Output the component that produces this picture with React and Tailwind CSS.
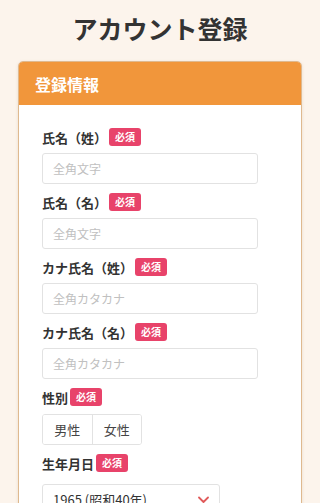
import React from 'react';

const Badge = () => (
  <span className="ml-[2px] inline-flex h-[18px] items-center rounded-[3px] bg-[#e8436a] px-[6px] text-[10px] font-bold leading-none text-white">
    必須
  </span>
);

const Label = ({ children }) => (
  <div className="flex h-[18px] items-center">
    <span className="text-[13px] font-bold leading-none text-[#333]">{children}</span>
    <Badge />
  </div>
);

const TextField = ({ label, placeholder }) => (
  <div className="flex flex-col gap-[7px]">
    <Label>{label}</Label>
    <input
      type="text"
      placeholder={placeholder}
      className="h-[31px] w-[216px] rounded-[3px] border border-[#e2e2e2] bg-white px-[10px] text-[12px] text-[#333] outline-none placeholder:text-[#c0c0c0]"
    />
  </div>
);

export default function App() {
  return (
    <div
      className="min-h-[503px] bg-[#fcf4ec] px-[18px] pt-[12px]"
      style={{ fontFamily: '"Noto Sans CJK JP", "Noto Sans", sans-serif' }}
    >
      <h1 className="text-center text-[25px] font-bold leading-[32px] text-[#333]">アカウント登録</h1>

      <div className="mt-[17px] overflow-hidden rounded-[5px] border border-[#dfb98f] bg-white shadow-[0_1px_3px_rgba(180,140,100,0.25)]">
        <div className="flex h-[43px] items-center bg-[#f1963b] px-[16px]">
          <span className="text-[16px] font-bold text-white">登録情報</span>
        </div>

        <div className="flex flex-col gap-[9px] px-[23px] pb-[24px] pt-[23px]">
          <TextField label="氏名（姓）" placeholder="全角文字" />
          <TextField label="氏名（名）" placeholder="全角文字" />
          <TextField label="カナ氏名（姓）" placeholder="全角カタカナ" />
          <TextField label="カナ氏名（名）" placeholder="全角カタカナ" />

          <div className="flex flex-col gap-[8px]">
            <Label>性別</Label>
            <div className="flex w-[100px] overflow-hidden rounded-[3px] border border-[#e2e2e2]">
              <button className="h-[29px] flex-1 border-r border-[#e2e2e2] bg-white text-[13px] text-[#444]">男性</button>
              <button className="h-[29px] flex-1 bg-white text-[13px] text-[#444]">女性</button>
            </div>
          </div>

          <div className="flex flex-col gap-[12px]">
            <Label>生年月日</Label>
            <div className="flex h-[31px] w-[178px] items-center justify-between rounded-[3px] border border-[#e2e2e2] bg-white pl-[10px] pr-[10px]">
              <span className="text-[13px] text-[#333]">1965 (昭和40年)</span>
              <svg width="11" height="8" viewBox="0 0 11 8" fill="none">
                <path d="M1 1.5L5.5 6L10 1.5" stroke="#e05a5a" strokeWidth="1.8" strokeLinecap="round" strokeLinejoin="round" />
              </svg>
            </div>
          </div>
        </div>
      </div>
    </div>
  );
}
